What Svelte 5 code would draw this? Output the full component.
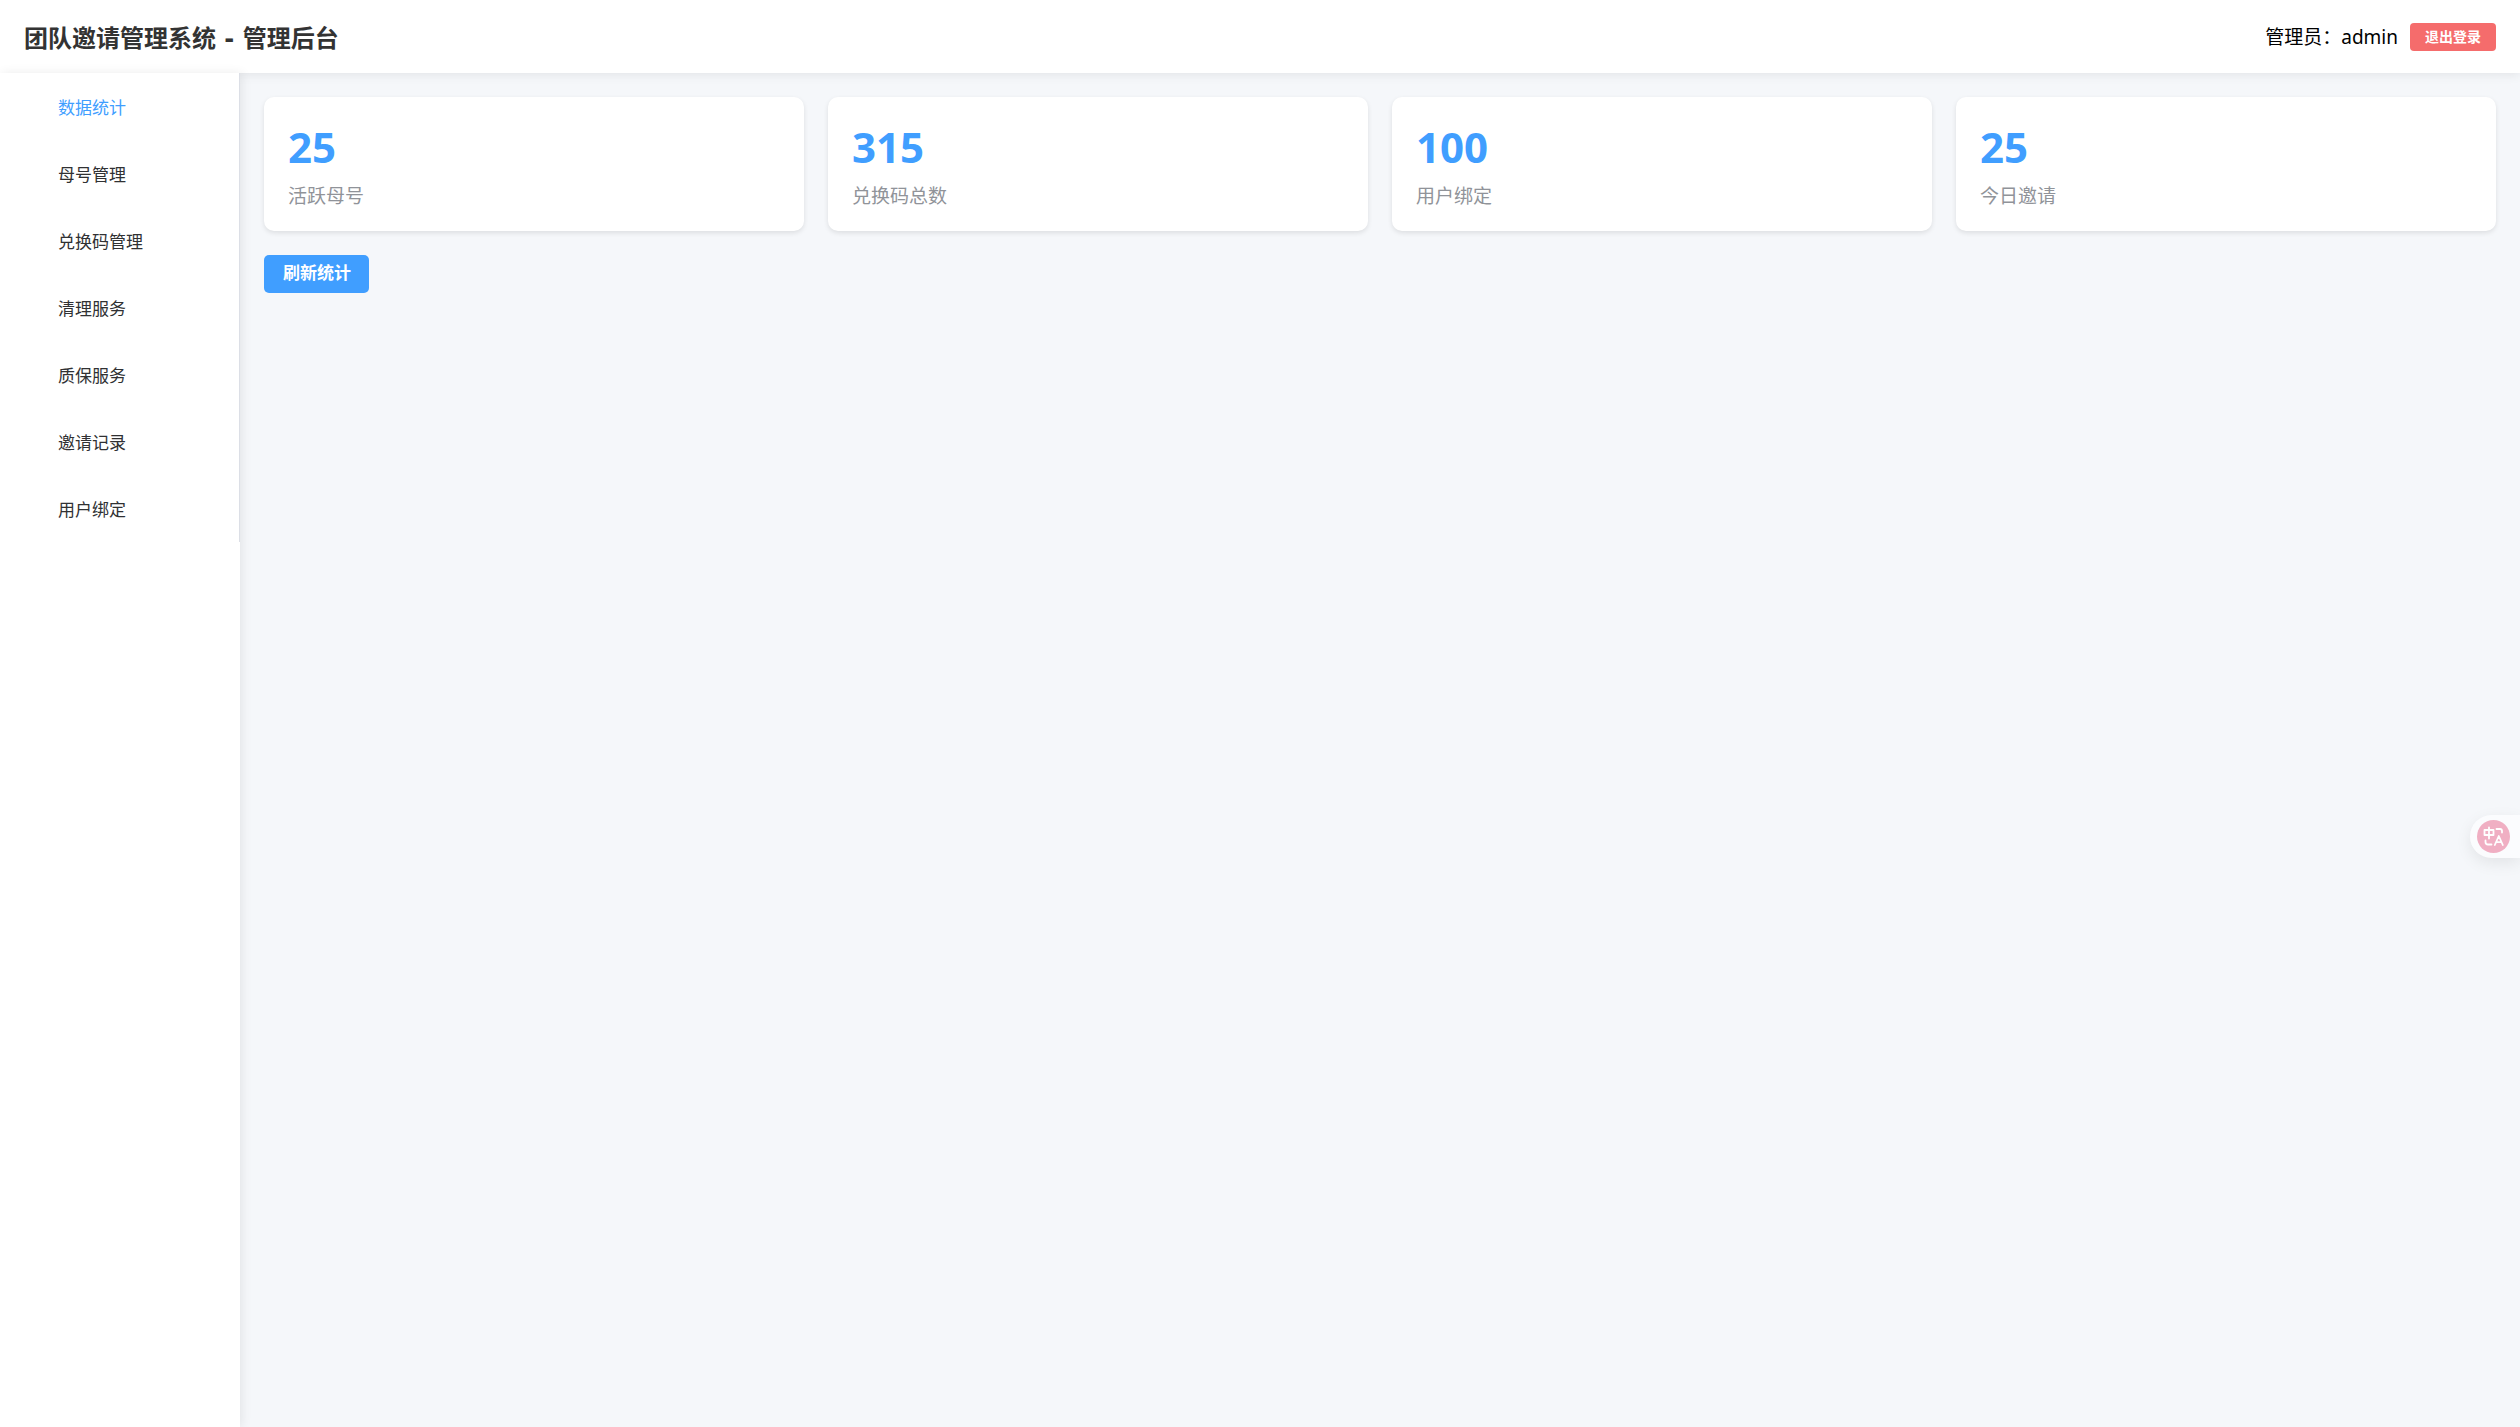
<script lang="ts">
    interface Stat {
        value: number;
        label: string;
    }

    const menu: string[] = [
        '数据统计',
        '母号管理',
        '兑换码管理',
        '清理服务',
        '质保服务',
        '邀请记录',
        '用户绑定'
    ];

    const stats: Stat[] = [
        { value: 25, label: '活跃母号' },
        { value: 315, label: '兑换码总数' },
        { value: 100, label: '用户绑定' },
        { value: 25, label: '今日邀请' }
    ];

    let active = $state('数据统计');
</script>

<div class="layout">
    <header class="header">
        <h1>团队邀请管理系统 - 管理后台</h1>
        <div class="user">
            <span>管理员：admin</span>
            <button class="logout">退出登录</button>
        </div>
    </header>

    <div class="body">
        <aside class="sidebar">
            <nav class="menu">
                {#each menu as item}
                    <button
                            class="menu-item"
                            class:active={active === item}
                            onclick={() => (active = item)}
                    >
                        {item}
                    </button>
                {/each}
            </nav>
        </aside>

        <main class="content">
            <div class="stats">
                {#each stats as stat}
                    <div class="card">
                        <div class="value">{stat.value}</div>
                        <div class="label">{stat.label}</div>
                    </div>
                {/each}
            </div>
            <button class="refresh">刷新统计</button>
        </main>
    </div>
</div>

<button class="translate" aria-label="翻译">
    <svg viewBox="0 0 33 33" width="33" height="33" fill="none" stroke="#fff" stroke-width="1.8" stroke-linecap="round" stroke-linejoin="round">
        <circle cx="16.5" cy="16.5" r="16.5" fill="#f0afc3" stroke="none" />
        <path d="M7.500 10h9v5h-9zM12 7.500v11" />
        <path d="M19.500 9h3.500a2 2 0 0 1 2 2v1.500" />
        <path d="M8.500 20.500v1.500a2.500 2.500 0 0 0 2.500 2.500h3.500" />
        <path d="M17.800 25l4-9 4 9M19.500 22.200h4.800" />
    </svg>
</button>

<style>
    :global(body) {
        margin: 0;
        background: #f5f7fa;
    }

    .layout,
    button {
        font-family: "Noto Sans", "Noto Sans CJK SC", sans-serif;
    }

    .layout {
        min-height: 100vh;
        display: flex;
        flex-direction: column;
        color: #000;
    }

    button {
        border: none;
        cursor: pointer;
    }

    .header {
        box-sizing: border-box;
        display: flex;
        align-items: center;
        justify-content: space-between;
        height: 73px;
        padding: 0 24px;
        background: #fff;
        box-shadow: 0 2px 10px rgba(0, 0, 0, 0.08);
    }

    .header h1 {
        margin: 4px 0 0;
        font-family: "DejaVu Sans", "Noto Sans CJK SC", sans-serif;
        font-size: 24px;
        line-height: 32px;
        color: #333;
    }

    .user {
        display: flex;
        align-items: center;
        gap: 12px;
        font-size: 19px;
        line-height: 28px;
    }

    .logout {
        height: 28px;
        padding: 0 15px;
        border-radius: 4px;
        background: #f56c6c;
        color: #fff;
        font-size: 14px;
        font-weight: 700;
        line-height: 20px;
    }

    .body {
        flex: 1;
        display: flex;
    }

    .sidebar {
        position: relative;
        flex: 0 0 240px;
        background: #fff;
        box-shadow: 2px 0 10px rgba(0, 0, 0, 0.08);
    }

    .menu {
        display: flex;
        flex-direction: column;
        border-right: 1px solid #dcdfe6;
    }

    .menu-item {
        height: 67px;
        padding: 0 24px 0 58px;
        background: none;
        color: #303133;
        font-size: 17px;
        text-align: left;
    }

    .menu-item.active {
        color: #409eff;
    }

    .content {
        flex: 1;
        padding: 24px;
    }

    .stats {
        display: grid;
        grid-template-columns: repeat(4, 1fr);
        gap: 24px;
        margin-bottom: 24px;
    }

    .card {
        padding: 24px 24px 22px;
        border-radius: 10px;
        background: #fff;
        box-shadow: 0 2px 5px rgba(0, 0, 0, 0.1);
    }

    .value {
        color: #409eff;
        font-size: 42px;
        font-weight: 700;
        line-height: 52px;
    }

    .label {
        margin-top: 10px;
        color: #909399;
        font-size: 19px;
        line-height: 26px;
    }

    .refresh {
        height: 38px;
        padding: 0 18px 6px 19px;
        border-radius: 5px;
        background: #409eff;
        color: #fff;
        font-size: 17px;
        font-weight: 700;
    }

    .translate {
        position: fixed;
        top: 815px;
        right: 0;
        display: flex;
        padding: 5px 10px 5px 7px;
        border-radius: 22px 0 0 22px;
        background: #fbfcfe;
        box-shadow: 0 5px 16px rgba(0, 0, 0, 0.08);
    }
</style>
